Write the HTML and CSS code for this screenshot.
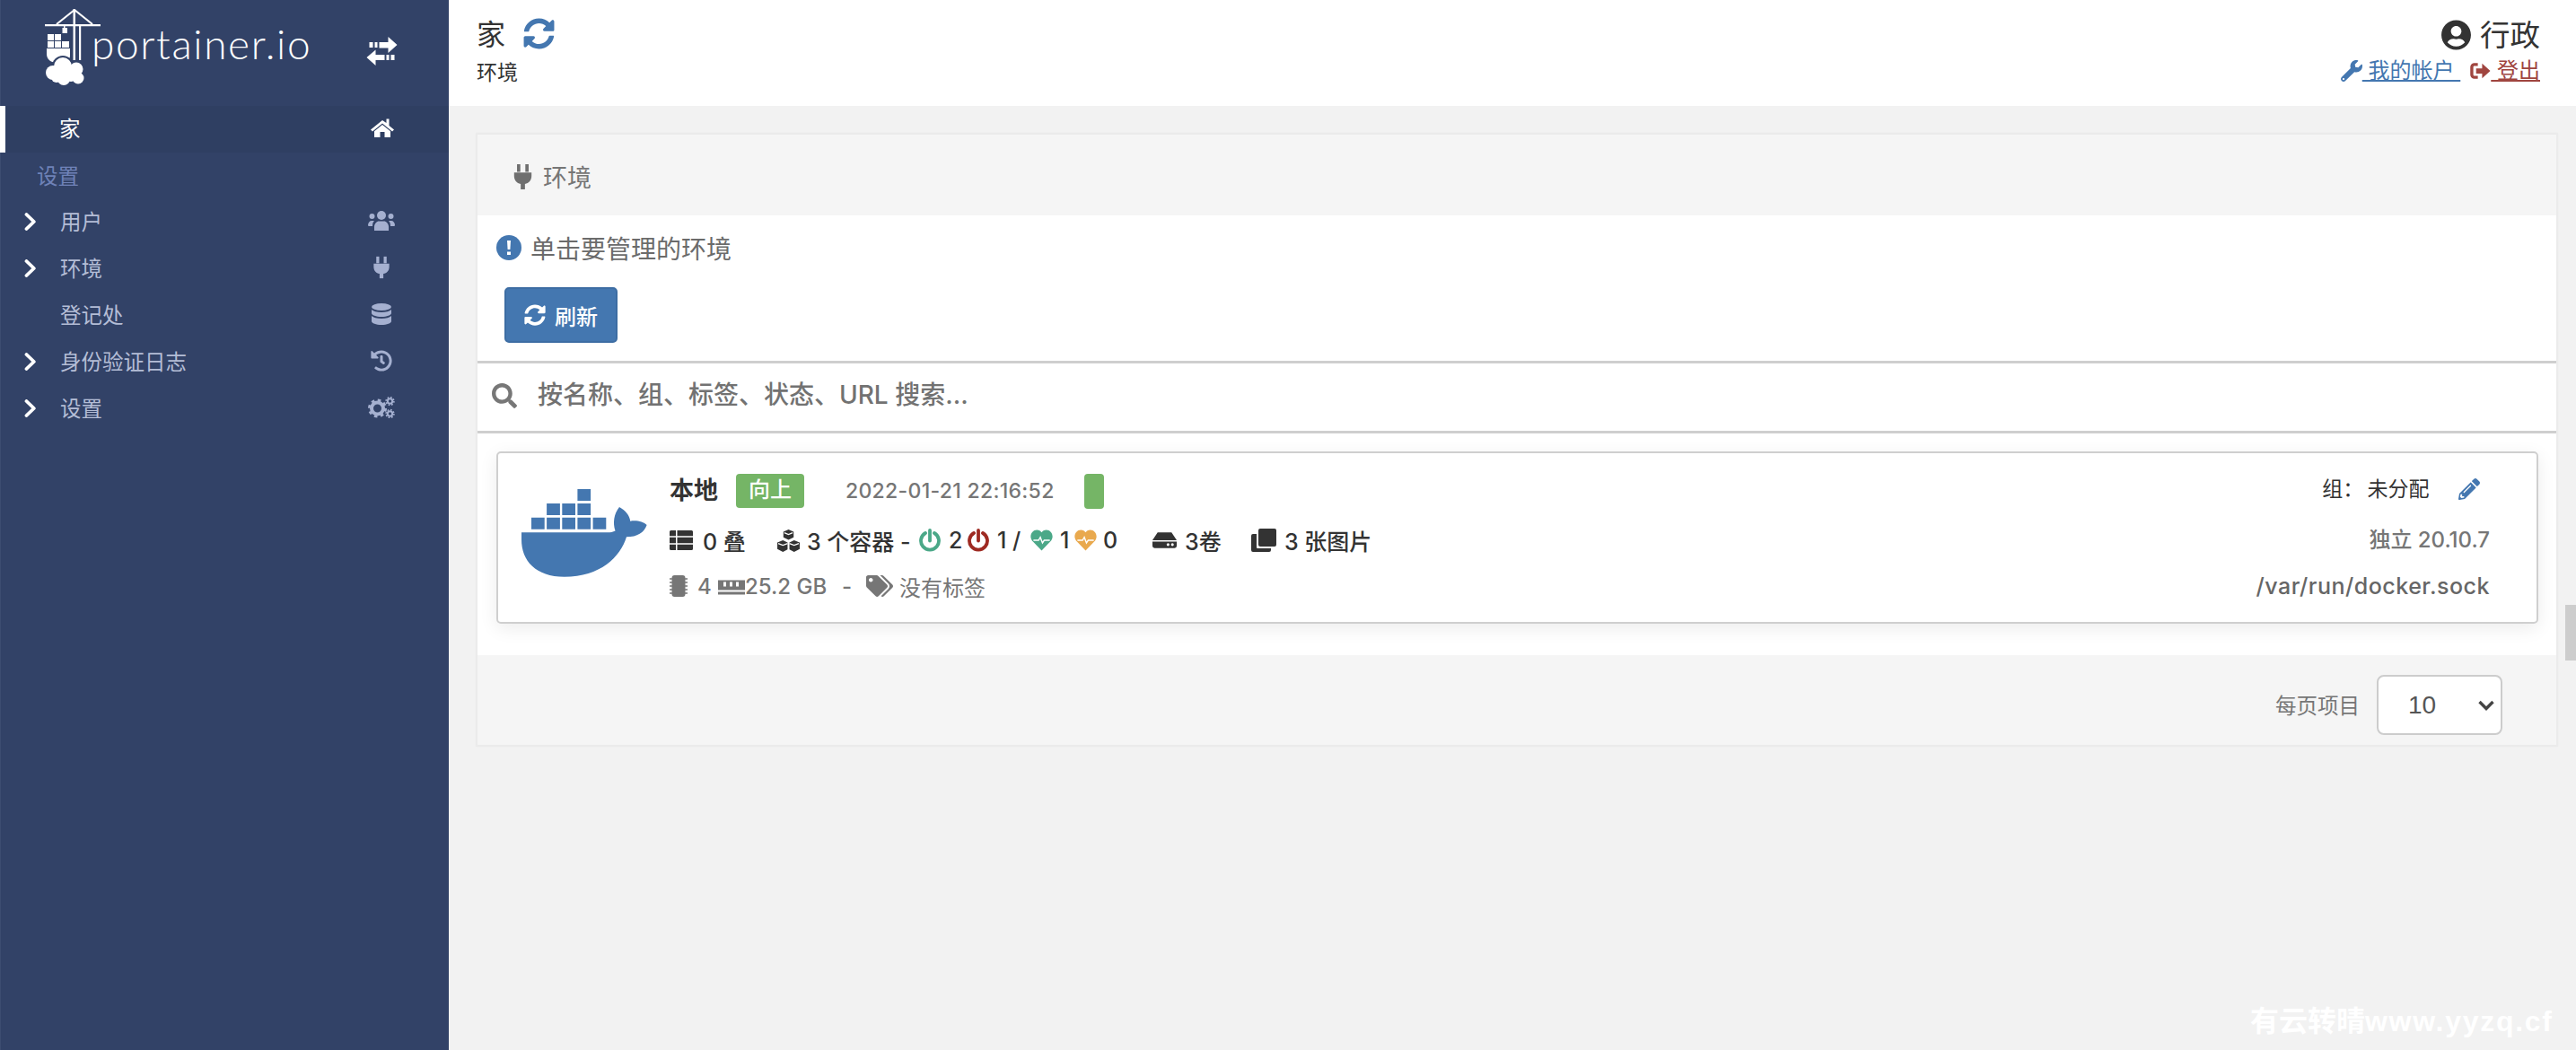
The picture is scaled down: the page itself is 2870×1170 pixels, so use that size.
FILE: index.html
```html
<!DOCTYPE html>
<html lang="zh">
<head>
<meta charset="utf-8">
<title>Portainer</title>
<link rel="stylesheet" href="styles.css">
</head>
<body>
<svg class="defs" aria-hidden="true">
  <symbol id="sync" viewBox="0 0 512 512"><path d="M370.72 133.28C339.458 104.008 298.888 87.962 255.848 88c-77.458.068-144.328 53.178-162.791 126.85-1.344 5.363-6.122 9.15-11.651 9.15H24.103c-7.498 0-13.194-6.807-11.807-14.176C33.933 94.924 134.813 8 256 8c66.448 0 126.791 26.136 171.315 68.685L463.03 40.97C478.149 25.851 504 36.559 504 57.941V192c0 13.255-10.745 24-24 24H345.941c-21.382 0-32.09-25.851-16.971-40.971l41.75-41.749zM32 296h134.059c21.382 0 32.09 25.851 16.971 40.971l-41.75 41.75c31.262 29.273 71.835 45.319 114.876 45.28 77.418-.07 144.315-53.144 162.787-126.849 1.344-5.363 6.122-9.15 11.651-9.15h57.304c7.498 0 13.194 6.807 11.807 14.176C478.067 417.076 377.187 504 256 504c-66.448 0-126.791-26.136-171.315-68.685L48.97 471.03C33.851 486.149 8 475.441 8 454.059V320c0-13.255 10.745-24 24-24z"/></symbol>
  <symbol id="plug" viewBox="0 0 18 26"><path d="M3 0h3.4v8H3zM11.6 0H15v8h-3.4zM0 8.5h18v3.6c0 4.4-2.7 7.6-6.8 8.3V26H6.800v-5.600C2.700 19.700 0 16.500 0 12.100z"/></symbol>
  <symbol id="chev" viewBox="0 0 14 20"><path d="M2.500 2 10.800 10 2.500 18" fill="none" stroke="currentColor" stroke-width="3.800" stroke-linecap="round" stroke-linejoin="round"/></symbol>
  <symbol id="power" viewBox="0 0 24 26"><path d="M7 5a10 10 0 1 0 10 0" fill="none" stroke="currentColor" stroke-width="3.800" stroke-linecap="round"/><path d="M12 2v11.500" fill="none" stroke="currentColor" stroke-width="3.800" stroke-linecap="round"/></symbol>
  <symbol id="heart" viewBox="0 0 26 24"><path d="M13 24 2 12.500C-2 7 2 0 7.500 0 10 0 12 1.300 13 3 14 1.300 16 0 18.500 0 24 0 28 7 24 12.500z" fill="currentColor"/><path d="M3.500 12h6l2-3.500 2.500 6.500 2-3h6.500" fill="none" stroke="#fff" stroke-width="1.500"/></symbol>
</svg>
<div class="app">
  <aside class="sidebar">
    <div class="brand">
      <svg class="logo-mark" viewBox="0 0 64 86">
        <path d="M1 17h62v2.200H1zM32.500 0H35v57h-2.500zM39 19h2.200v38H39z" fill="#fff"/>
        <path d="M34 1 14 17M34 1l20 16" fill="none" stroke="#fff" stroke-width="2.200"/>
        <path d="M22 19h1.500v2H22zM20.500 21H26v6h-5.500z" fill="#fff"/>
        <path d="M4 28h7v7H4zM12 28h7v7h-7zM4 36h7v7H4zM12 36h7v7h-7zM20 36h8v7h-8z" fill="#fff"/>
        <path d="M3 44h26v8c0 5-4 8-13 8C7 60 3 56 3 50z" fill="#fff"/>
        <circle cx="21" cy="64" r="12" fill="#324267"/>
        <circle cx="21" cy="64" r="10" fill="#fff"/><circle cx="10" cy="71" r="8" fill="#fff"/><circle cx="36" cy="67" r="7.500" fill="#fff"/><circle cx="38" cy="77" r="6.500" fill="#fff"/><circle cx="22" cy="78" r="7" fill="#fff"/><circle cx="30" cy="74" r="7" fill="#fff"/><circle cx="14" cy="76" r="6" fill="#fff"/>
      </svg>
      <span class="logo-text">portainer.io</span>
      <svg class="toggle" viewBox="0 0 34 32">
        <path d="M3 6h4v6H3zM9 6h3v6H9zM14 6h10V0l10 9-10 9v-5.500H14zM31 20h-4v6h4zM25 20h-3v6h3zM20 20H10v-5.500L0 23l10 9v-6h10z" fill="#fff"/>
      </svg>
    </div>
    <nav class="nav">
      <a class="nav-row active"><span class="nav-label">家</span>
        <svg class="nav-icon home" viewBox="0 0 27 22"><path d="M13.500 3 .5 13.500l2 2 11-9 11 9 2-2-5.500-4.500V1.500h-3V6z"/><path d="M13.500 8 4.500 15.200V22H11v-6h5v6h6.500v-6.800z"/></svg>
      </a>
      <div class="nav-title">设置</div>
      <a class="nav-row"><svg class="chev"><use href="#chev"/></svg><span class="nav-label">用户</span>
        <svg class="nav-icon users" viewBox="0 0 30 22"><circle cx="15" cy="5" r="5"/><circle cx="4.500" cy="6" r="3"/><circle cx="25.500" cy="6" r="3"/><path d="M7 22v-4c0-4 3-6.500 5-6.500h6c2 0 5 2.500 5 6.500v4c0 0-16 0-16 0z"/><path d="M0 16c0-3 2-5 4-5h3c-1.500 1.500-2 3-2 6H1.500C.5 17 0 16.500 0 16zM30 16c0-3-2-5-4-5h-3c1.500 1.500 2 3 2 6h3.500c1 0 1.500-.5 1.500-1z"/></svg>
      </a>
      <a class="nav-row"><svg class="chev"><use href="#chev"/></svg><span class="nav-label">环境</span>
        <svg class="nav-icon plug"><use href="#plug"/></svg>
      </a>
      <a class="nav-row"><span class="nav-spacer"></span><span class="nav-label">登记处</span>
        <svg class="nav-icon db" viewBox="0 0 22 24"><ellipse cx="11" cy="4" rx="11" ry="4"/><path d="M0 7c2 2 6 3 11 3s9-1 11-3v4c0 2-5 4-11 4S0 13 0 11zM0 14c2 2 6 3 11 3s9-1 11-3v6c0 2-5 4-11 4S0 22 0 20z"/></svg>
      </a>
      <a class="nav-row"><svg class="chev"><use href="#chev"/></svg><span class="nav-label">身份验证日志</span>
        <svg class="nav-icon hist" viewBox="0 0 512 512"><path d="M504 255.531c.253 136.64-111.18 248.372-247.82 248.468-59.015.042-113.223-20.53-155.822-54.911-11.077-8.94-11.905-25.541-1.839-35.607l11.267-11.267c8.609-8.609 22.353-9.551 31.891-1.984C173.062 425.135 212.781 440 256 440c101.705 0 184-82.311 184-184 0-101.705-82.311-184-184-184-48.814 0-93.149 18.969-126.068 49.932l50.754 50.754c10.08 10.08 2.941 27.314-11.313 27.314H24c-8.837 0-16-7.163-16-16V38.627c0-14.254 17.234-21.393 27.314-11.314l49.372 49.372C129.209 34.136 189.552 8 256 8c136.81 0 247.747 110.78 248 247.531zm-180.912 78.784l9.823-12.63c8.138-10.463 6.253-25.542-4.21-33.679L288 256.349V152c0-13.255-10.745-24-24-24h-16c-13.255 0-24 10.745-24 24v135.651l65.409 50.874c10.463 8.137 25.541 6.253 33.679-4.21z"/></svg>
      </a>
      <a class="nav-row"><svg class="chev"><use href="#chev"/></svg><span class="nav-label">设置</span>
        <svg class="nav-icon cogs" viewBox="0 0 30 24"><circle cx="10.500" cy="13" r="6.500" fill="none" stroke="currentColor" stroke-width="4"/><circle cx="10.500" cy="13" r="9" fill="none" stroke="currentColor" stroke-width="3" stroke-dasharray="3.500 3.570"/><circle cx="24.500" cy="5" r="2.700" fill="none" stroke="currentColor" stroke-width="2"/><circle cx="24.500" cy="5" r="4.400" fill="none" stroke="currentColor" stroke-width="1.600" stroke-dasharray="1.700 1.750"/><circle cx="24.500" cy="19" r="2.700" fill="none" stroke="currentColor" stroke-width="2"/><circle cx="24.500" cy="19" r="4.400" fill="none" stroke="currentColor" stroke-width="1.600" stroke-dasharray="1.700 1.750"/></svg>
      </a>
    </nav>
  </aside>

  <main class="main">
    <header class="topbar">
      <div class="crumbs">
        <div class="page-title">家<svg class="title-sync"><use href="#sync"/></svg></div>
        <div class="page-sub">环境</div>
      </div>
      <div class="account">
        <div class="acc-name">
          <svg class="acc-icon" viewBox="0 0 496 512"><path d="M248 8C111 8 0 119 0 256s111 248 248 248 248-111 248-248S385 8 248 8zm0 96c48.600 0 88 39.400 88 88s-39.400 88-88 88-88-39.400-88-88 39.400-88 88-88zm0 344c-58.700 0-111.300-26.600-146.500-68.200 18.800-35.400 55.600-59.800 98.500-59.800 2.400 0 4.800.4 7.100 1.100 13 4.200 26.600 6.900 40.900 6.900 14.300 0 28-2.700 40.900-6.900 2.300-.7 4.700-1.100 7.100-1.100 42.900 0 79.700 24.400 98.500 59.800C359.300 421.400 306.700 448 248 448z"/></svg>
          行政
        </div>
        <div class="acc-links">
          <svg class="link-icon wrench" viewBox="0 0 512 512"><path d="M507.730 109.100c-2.240-9.030-13.540-12.090-20.120-5.510l-74.360 74.360-67.880-11.310-11.310-67.880 74.360-74.360c6.620-6.620 3.430-17.900-5.660-20.160-47.380-11.740-99.550.91-136.580 37.930-39.640 39.640-50.550 97.100-34.050 147.200L18.740 402.760c-24.990 24.990-24.990 65.510 0 90.500 24.990 24.990 65.510 24.990 90.500 0l213.210-213.210c50.120 16.710 107.470 5.680 147.370-34.220 37.070-37.070 49.700-89.320 37.910-136.730zM64 472c-13.250 0-24-10.750-24-24 0-13.260 10.750-24 24-24s24 10.740 24 24c0 13.250-10.750 24-24 24z"/></svg>
          <a class="link-blue">&nbsp;我的帐户&nbsp;</a>
          <svg class="link-icon out" viewBox="0 0 24 20"><path d="M9 2.500H5a3 3 0 0 0-3 3v9a3 3 0 0 0 3 3h4" fill="none" stroke="currentColor" stroke-width="3.500"/><path d="M7 7h7V1.500l9.500 8.500-9.500 8.500V13H7z"/></svg>
          <a class="link-red">&nbsp;登出</a>
        </div>
      </div>
    </header>

    <div class="content">
      <section class="widget">
        <div class="widget-head"><svg class="head-plug"><use href="#plug"/></svg>环境</div>
        <div class="hint">
          <svg class="hint-icon" viewBox="0 0 28 28"><circle cx="14" cy="14" r="14"/><path d="M12 6h4l-.6 10h-2.800zM12 18.500h4V22h-4z" fill="#fff"/></svg>
          单击要管理的环境
        </div>
        <button class="btn"><svg class="btn-sync"><use href="#sync"/></svg>刷新</button>
        <div class="search">
          <svg class="search-icon" viewBox="0 0 512 512"><path d="M505 442.700L405.300 343c-4.500-4.500-10.600-7-17-7H372c27.600-35.300 44-79.700 44-128C416 93.100 322.900 0 208 0S0 93.100 0 208s93.100 208 208 208c48.300 0 92.700-16.400 128-44v16.300c0 6.400 2.500 12.500 7 17l99.700 99.700c9.400 9.400 24.600 9.400 33.900 0l28.300-28.300c9.400-9.400 9.400-24.600.1-34zM208 336c-70.700 0-128-57.200-128-128 0-70.700 57.200-128 128-128 70.700 0 128 57.200 128 128 0 70.700-57.200 128-128 128z"/></svg>
          <span class="search-text">按名称、组、标签、状态、URL 搜索...</span>
        </div>
        <div class="list">
          <article class="card">
            <svg class="whale" viewBox="0 0 140 98">
              <path d="M62.400 0h14.700v13H62.400zM28.100 16h14.800v13H28.100zM45.300 16H60v13H45.300zM62.400 16h14.700v13H62.400zM11 31.700h14.700v13H11zM28.100 31.700h14.800v13H28.100zM45.300 31.700H60v13H45.300zM62.400 31.700h14.700v13H62.400zM79.600 31.700h14.700v13H79.600z"/>
              <path d="M0 48.300H96c3 0 6-.5 8.500-1.800-3-9-1.500-19 4.500-26.500 6.500 3.500 11.500 9 12.200 15.700 7-1.200 15 .6 18.400 4.300-3 8.500-10.500 13.300-22.600 13.300C110 76 88 97.700 47.800 97.700 16 97.700 0 80 0 56z"/>
            </svg>
            <div class="info">
              <div class="line-one">
                <strong class="env-name">本地</strong>
                <span class="badge">向上</span>
                <span class="date">2022-01-21 22:16:52</span>
                <span class="beat"></span>
              </div>
              <div class="line-two">
                <svg class="i-list" viewBox="0 0 26 22"><path d="M0 1.500A1.500 1.500 0 0 1 1.500 0H7v6.200H0zM8.500 0h16A1.500 1.500 0 0 1 26 1.500v4.700H8.500zM0 7.800h7v6.400H0zM8.500 7.800H26v6.400H8.500zM0 15.800h7V22H1.500A1.500 1.500 0 0 1 0 20.500zM8.500 15.800H26v4.700a1.500 1.500 0 0 1-1.500 1.500h-16z"/></svg>
                <span class="s1">0 叠</span>
                <svg class="i-cubes" viewBox="0 0 26 24"><path d="M13 0 7.500 2.300v6.200L13 11l5.500-2.500V2.300zM7 11.500 1 14v7l6 3 5-2.500V14zM19 11.500 14 14v7.500l5 2.500 6-3v-7z"/><path d="M8.500 3.500 13 5.300l4.500-1.800M2 15l5 2 5-2M14 15l5 2 5-2" fill="none" stroke="#fff" stroke-width="1.200"/></svg>
                <span class="s2">3 个容器 -</span>
                <svg class="i-pow green"><use href="#power"/></svg><span class="s3">2</span>
                <svg class="i-pow red"><use href="#power"/></svg><span class="s4">1 /</span>
                <svg class="i-heart green"><use href="#heart"/></svg><span class="s3b">1</span>
                <svg class="i-heart orange"><use href="#heart"/></svg><span class="s5">0</span>
                <svg class="i-hdd" viewBox="0 0 30 20"><path d="M7 1h16l6 9H1zM1 11.500h28v5a2.500 2.500 0 0 1-2.500 2.500h-23A2.500 2.500 0 0 1 1 16.500z"/><circle cx="24" cy="15" r="1.600" fill="#fff"/><circle cx="19" cy="15" r="1.600" fill="#fff"/></svg>
                <span class="s6">3卷</span>
                <svg class="i-clone" viewBox="0 0 28 26"><path d="M8 2a2 2 0 0 1 2-2h16a2 2 0 0 1 2 2v16a2 2 0 0 1-2 2H10a2 2 0 0 1-2-2z"/><path d="M6 6v15a1 1 0 0 0 1 1h15v2a2 2 0 0 1-2 2H2a2 2 0 0 1-2-2V8a2 2 0 0 1 2-2z"/></svg>
                <span class="s7">3 张图片</span>
              </div>
              <div class="line-three">
                <svg class="i-chip" viewBox="0 0 20 24"><rect x="2.500" y="0" width="15" height="24" rx="3"/><path d="M0 4h3M0 8h3M0 12h3M0 16h3M0 20h3M17 4h3M17 8h3M17 12h3M17 16h3M17 20h3" stroke="currentColor" stroke-width="1.600"/></svg>
                <span class="m1">4</span>
                <svg class="i-mem" viewBox="0 0 30 20"><path d="M0 3h30v11H0zM0 16h30v3H0z"/><path d="M6 5h3v5H6zM13 5h3v5h-3zM20 5h3v5h-3z" fill="#fff"/></svg>
                <span class="m2">25.2 GB</span>
                <span class="m3">-</span>
                <svg class="i-tags" viewBox="0 0 640 512"><path d="M497.941 225.941L286.059 14.059A48 48 0 0 0 252.118 0H48C21.490 0 0 21.490 0 48v204.118a48 48 0 0 0 14.059 33.941l211.882 211.882c18.744 18.745 49.136 18.746 67.882 0l204.118-204.118c18.745-18.745 18.745-49.137 0-67.882zM112 160c-26.510 0-48-21.490-48-48s21.490-48 48-48 48 21.490 48 48-21.490 48-48 48zm513.941 133.823L421.823 497.941c-18.745 18.745-49.137 18.745-67.882 0l-.36-.36L527.640 323.522c16.999-16.999 26.360-39.600 26.360-63.640s-9.362-46.641-26.360-63.640L331.397 0h48.721a48 48 0 0 1 33.941 14.059l211.882 211.882c18.745 18.745 18.745 49.137 0 67.882z"/></svg>
                <span class="m4">没有标签</span>
              </div>
            </div>
            <div class="side">
              <div class="group">组：&thinsp;未分配
                <svg class="i-pencil" viewBox="0 0 512 512"><path d="M497.900 142.100l-46.100 46.100c-4.700 4.700-12.300 4.700-17 0l-111-111c-4.700-4.700-4.700-12.300 0-17l46.100-46.100c18.700-18.700 49.100-18.700 67.900 0l60.100 60.100c18.800 18.700 18.800 49.100 0 67.900zM284.200 99.800L21.600 362.400.4 483.900c-2.900 16.400 11.400 30.600 27.800 27.800l121.500-21.300 262.600-262.600c4.700-4.700 4.700-12.300 0-17l-111-111c-4.800-4.700-12.400-4.700-17.100 0zM124.100 339.900c-5.500-5.500-5.500-14.300 0-19.800l154-154c5.500-5.500 14.300-5.500 19.800 0s5.500 14.300 0 19.800l-154 154c-5.500 5.500-14.300 5.500-19.800 0zM88 424h48v36.300l-64.500 11.300-31.100-31.100L51.700 376H88v48z"/></svg>
              </div>
              <div class="version">独立 20.10.7</div>
              <div class="sock">/var/run/docker.sock</div>
            </div>
          </article>
        </div>
        <footer class="widget-foot">
          <span class="per-page">每页项目</span>
          <div class="select-wrap">
            <select class="select"><option>10</option></select>
            <svg class="select-arrow" viewBox="0 0 20 14"><path d="M2.500 3 10 10.500 17.500 3" fill="none" stroke="currentColor" stroke-width="3.400"/></svg>
          </div>
        </footer>
      </section>
    </div>
  </main>
</div>
<div class="scroll-thumb"></div>
<div class="watermark"><span class="wm-cjk">有云转晴</span>www.yyzq.cf</div>
</body>
</html>
```

FILE: styles.css
```css
* { box-sizing: border-box; }
html, body { margin: 0; height: 100%; overflow: hidden; }
body {
  font-family: "Inter", "Noto Sans CJK SC", sans-serif;
  background: #f2f2f2;
  color: #333;
}
.defs { display: none; }
svg { fill: currentColor; flex: none; }
.app { display: flex; height: 1170px; }

/* sidebar */
.sidebar { width: 500px; flex: none; background: #324267; border-left: 1px solid #3c4c70; }
.brand { height: 118px; display: flex; align-items: flex-start; padding: 10px 0 0 48px; position: relative; }
.logo-mark { width: 64px; height: 86px; }
.logo-text {
  font-family: "Lato", sans-serif;
  font-weight: 300;
  font-size: 46px;
  line-height: 50px;
  color: #fff;
  margin: 14px 0 0 -11px;
  letter-spacing: 1.600px;
}
.toggle { width: 35px; height: 32px; position: absolute; left: 407px; top: 41px; }
.nav-row {
  height: 52px;
  display: flex;
  align-items: center;
  position: relative;
  padding-left: 26px;
  color: #b4bdd6;
  font-size: 23.500px;
}
.nav-label { display: block; padding-bottom: 4px; }
.nav-row.active { background: #2f3f62; color: #fff; border-left: 6px solid #fff; margin-left: -1px; padding-left: 60px; }
.nav-title { height: 52px; line-height: 53px; padding-left: 40px; color: #6f82b8; font-size: 23.500px; }
.chev { width: 14px; height: 20px; color: #fff; margin-right: 26px; margin-top: -2px; }
.nav-spacer { width: 40px; }
.nav-icon { position: absolute; left: 424px; top: 24px; transform: translate(-50%, -50%); color: #a5b0d0; }
.active .nav-icon { color: #fff; left: 420px; }
.home { width: 27px; height: 22px; }
.users { width: 30px; height: 22px; }
.plug { width: 18px; height: 25px; }
.db { width: 22px; height: 24px; }
.hist { width: 24px; height: 24px; }
.cogs { width: 30px; height: 24px; }

/* top */
.main { flex: 1; display: flex; flex-direction: column; min-width: 0; }
.topbar { height: 118px; background: #fff; flex: none; display: flex; justify-content: space-between; padding: 0 40px 0 31px; }
.page-title { font-size: 32px; line-height: 36px; margin-top: 21px; display: flex; align-items: center; color: #333; }
.title-sync { width: 35px; height: 35px; margin-left: 20px; margin-top: -3px; color: #4477b0; }
.page-sub { font-size: 23px; line-height: 30px; margin-top: 9px; color: #333; }
.account { display: flex; flex-direction: column; align-items: flex-end; }
.acc-name { font-size: 33.500px; line-height: 40px; margin-top: 19px; display: flex; align-items: center; color: #333; }
.acc-icon { width: 33px; height: 34px; margin-right: 10px; }
.acc-links { display: flex; align-items: center; font-size: 24px; line-height: 30px; margin-top: 5px; }
.link-blue { color: #4477b0; text-decoration: underline; margin-right: 11px; }
.link-red { color: #a0453f; text-decoration: underline; }
.link-icon { height: 24px; }
.wrench { width: 24px; color: #4477b0; }
.out { width: 23px; height: 20px; color: #a0453f; }

/* widget */
.content { padding: 30px 20px 0 31px; }
.widget { background: #fff; border: 2px solid #ebebeb; box-shadow: 0 0 2px rgba(0,0,0,.03); margin-left: -1px; }
.widget-head { height: 90px; background: #f5f5f5; display: flex; align-items: center; padding: 3px 0 0 40px; font-size: 27px; color: #767676; }
.head-plug { width: 21px; height: 28px; margin-right: 12px; color: #6f6f6f; }
.hint { display: flex; align-items: center; height: 28px; margin: 22px 0 0 21px; font-size: 28px; color: #6b6b6b; }
.hint-icon { width: 28px; height: 28px; margin-right: 10px; color: #4477b0; }
.btn {
  display: flex; align-items: center; justify-content: center;
  width: 126px; height: 62px; margin: 30px 0 0 30px;
  background: #4477b0; border: 2px solid #3d6da3; border-radius: 5px;
  color: #fff; font: inherit; font-size: 24px; font-weight: 500;
}
.btn-sync { width: 24px; height: 24px; margin-right: 10px; }
.search {
  height: 81px; margin-top: 20px;
  border-top: 3px solid #cfcfcf; border-bottom: 3px solid #cfcfcf;
  display: flex; align-items: center; padding-left: 16px;
  font-size: 28px; color: #727272; font-weight: 500;
}
.search-text { padding-bottom: 9px; }
.search-icon { width: 28px; height: 28px; margin-right: 23px; margin-top: -3px; color: #777; }
.list { padding: 20px 20px 35px 21px; }
.card {
  height: 192px; display: flex; position: relative;
  border: 2px solid #cfcfcf; border-radius: 5px; background: #fff;
  box-shadow: 0 5px 20px rgba(0,0,0,.08);
}
.whale { width: 140px; height: 98px; margin: 40px 25px 0 26px; color: #4477b0; }
.info { flex: 1; padding-top: 22px; }
.line-one, .line-two, .line-three { display: flex; align-items: center; white-space: nowrap; }
.line-one { height: 40px; font-size: 24px; }
.env-name { font-size: 27px; font-weight: 700; color: #333; padding-bottom: 5px; }
.badge { width: 76px; height: 38px; line-height: 36px; text-align: center; background: #75b566; border-radius: 4px; color: #fff; margin-left: 20px; font-size: 24px; font-weight: 500; }
.date { margin-left: 46px; color: #767676; font-weight: 500; font-size: 23px; width: 266px; letter-spacing: .3px; }
.beat { width: 22px; height: 39px; background: #75b566; border-radius: 4px; }
.line-two { height: 36px; margin-top: 17px; font-size: 25px; font-weight: 500; color: #333; }
.i-list { width: 26px; height: 22px; margin-right: 11px; }
.s1 { width: 82px; }
.i-cubes { width: 27px; height: 25px; margin-right: 7px; }
.s2 { width: 125px; }
.i-pow { width: 24px; height: 26px; }
.i-heart { width: 25px; height: 24px; }
.green { color: #4ba888; }
.red { color: #9e2a22; }
.orange { color: #e9a94e; }
.s3 { width: 30px; padding-left: 9px; }
.s3b { width: 24px; padding-left: 8px; }
.s4 { width: 46px; padding-left: 9px; }
.s5 { width: 61px; padding-left: 7px; }
.i-hdd { width: 29px; height: 20px; margin-right: 8px; }
.s6 { width: 74px; }
.i-clone { width: 28px; height: 26px; margin-right: 9px; }
.line-three { height: 36px; margin-top: 15px; font-size: 24px; color: #767676; font-weight: 500; }
.i-chip { width: 20px; height: 26px; margin-right: 11px; }
.m1 { width: 23px; }
.i-mem { width: 30px; height: 21px; }
.m2 { width: 108px; }
.m3 { width: 27px; }
.i-tags { width: 30px; height: 24px; margin-right: 7px; }
.m4 { font-weight: 400; }
.side { position: absolute; right: 52px; top: 22px; text-align: right; }
.group { font-size: 23px; height: 40px; line-height: 36px; color: #333; }
.i-pencil { width: 24px; height: 24px; margin-left: 26px; color: #4477b0; vertical-align: -4px; margin-right: 11px; }
.version { height: 36px; line-height: 36px; margin-top: 17px; font-size: 24px; color: #767676; font-weight: 500; }
.sock { height: 36px; line-height: 36px; margin-top: 15px; font-size: 25px; letter-spacing: .5px; color: #666; font-weight: 500; }
.widget-foot { height: 100px; background: #f5f5f5; display: flex; justify-content: flex-end; align-items: center; padding: 10px 60px 0 0; }
.per-page { font-size: 23.500px; color: #767676; margin-right: 19px; }
.select-wrap { position: relative; width: 140px; height: 67px; }
.select {
  width: 100%; height: 100%; appearance: none; -webkit-appearance: none;
  background: #fff; border: 2px solid #ccc; border-radius: 8px;
  font: inherit; font-family: "Liberation Sans", sans-serif; font-size: 28px; color: #555;
  padding-left: 33px;
}
.select-arrow { position: absolute; right: 8px; top: 27px; width: 20px; height: 14px; color: #444; }
.scroll-thumb { position: absolute; left: 2858px; top: 674px; width: 12px; height: 62px; background: #cdcdcd; }
.watermark {
  position: absolute; left: 2507px; top: 1113px;
  font-family: "Liberation Sans", sans-serif;
  font-size: 32px; font-weight: 700; line-height: 44px; color: #fff; white-space: nowrap; letter-spacing: 1.700px;
}
.wm-cjk { font-family: "Noto Sans CJK SC", sans-serif; letter-spacing: 0; }
```
